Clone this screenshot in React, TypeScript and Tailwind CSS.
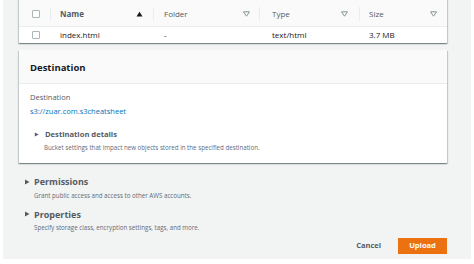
import React from 'react'

const font = { fontFamily: '"Open Sans", "Noto Sans", sans-serif' }

function Box() {
  return <span className="inline-block w-[8px] h-[8px] border border-[#aab7b8] rounded-[1px] bg-white" />
}

function Filter() {
  return (
    <svg width="7" height="6" viewBox="0 0 7 6" className="shrink-0">
      <path d="M0.5 0.8 H6.5 L3.5 5.2 Z" fill="none" stroke="#879596" strokeWidth="1" />
    </svg>
  )
}

function Caret({ size = 6 }: { size?: number }) {
  return (
    <svg width={size} height={size} viewBox="0 0 6 6" className="shrink-0">
      <path d="M1 0.5 L5.5 3 L1 5.5 Z" fill="#545b64" />
    </svg>
  )
}

function Section({ title, desc }: { title: string; desc: string }) {
  return (
    <div className="flex flex-col">
      <div className="flex items-center gap-[4px] h-[12px]">
        <Caret />
        <span className="text-[9px] font-bold text-[#545b64] leading-none">{title}</span>
      </div>
      <div className="pl-[10px] text-[6.2px] text-[#5f6b7a] leading-none mt-[5px]">{desc}</div>
    </div>
  )
}

export default function App() {
  return (
    <div className="w-[474px] h-[264px] bg-white overflow-hidden" style={font}>
      <div className="ml-[3px] w-[468px] h-[259px] bg-[#f2f3f3] flex flex-col pl-[16px] pr-[24px]">
        {/* objects table */}
        <div className="mt-[-6px] bg-white shadow-[0_1px_1px_rgba(0,28,36,0.3),1px_1px_1px_rgba(0,28,36,0.15),-1px_1px_1px_rgba(0,28,36,0.15)]">
          <div className="flex items-center h-[33px] pt-[8px] bg-[#fafafa] border-b border-[#eaeded] text-[8px] font-bold text-[#545b64]">
            <div className="w-[31px] flex justify-center pl-[2px]"><Box /></div>
            <div className="w-[103px] h-[14px] border-l border-[#eaeded] flex items-center justify-between pl-[9px] pr-[10px]">
              <span>Name</span>
              <svg width="7" height="6" viewBox="0 0 7 6"><path d="M0.5 5.5 L3.5 0.8 L6.5 5.5 Z" fill="#16191f" /></svg>
            </div>
            <div className="w-[106px] h-[14px] border-l border-[#eaeded] flex items-center justify-between pl-[10px] pr-[9px] font-normal">
              <span>Folder</span><Filter />
            </div>
            <div className="w-[100px] h-[14px] border-l border-[#eaeded] flex items-center justify-between pl-[12px] pr-[11px] font-normal">
              <span>Type</span><Filter />
            </div>
            <div className="flex-1 h-[14px] border-l border-[#eaeded] flex items-center justify-between pl-[9px] pr-[10px] font-normal">
              <span>Size</span><Filter />
            </div>
          </div>
          <div className="flex items-center h-[16px] text-[8px] text-[#16191f]">
            <div className="w-[31px] flex justify-center pl-[2px]"><Box /></div>
            <div className="w-[103px] pl-[10px]">index.html</div>
            <div className="w-[106px] pl-[11px]">-</div>
            <div className="w-[100px] pl-[13px]">text/html</div>
            <div className="flex-1 pl-[10px]">3.7 MB</div>
          </div>
        </div>

        {/* destination card */}
        <div className="mt-[7px] bg-white shadow-[0_1px_1px_rgba(0,28,36,0.3),1px_1px_1px_rgba(0,28,36,0.15),-1px_1px_1px_rgba(0,28,36,0.15)] flex flex-col">
          <div className="h-[34px] pt-[3px] bg-[#fafafa] border-b border-[#eaeded] flex items-center px-[11px]">
            <span className="text-[9.5px] font-bold text-[#16191f]">Destination</span>
          </div>
          <div className="flex flex-col px-[11px] pt-[8px] pb-[12px]">
            <span className="text-[7.5px] text-[#545b64] leading-[10px]">Destination</span>
            <span className="text-[7.5px] text-[#0073bb] leading-[10px] mt-[4px]">s3://zuar.com.s3cheatsheet</span>
            <div className="flex items-center gap-[6px] mt-[15px] pl-[4px]">
              <Caret size={5} />
              <span className="text-[7.6px] font-bold text-[#545b64] leading-none">Destination details</span>
            </div>
            <span className="pl-[14px] mt-[6px] text-[6.2px] text-[#5f6b7a] leading-none">
              Bucket settings that impact new objects stored in the specified destination.
            </span>
          </div>
        </div>

        {/* collapsed sections */}
        <div className="flex flex-col gap-[9px] mt-[13px] pl-[5px]">
          <Section title="Permissions" desc="Grant public access and access to other AWS accounts." />
          <Section title="Properties" desc="Specify storage class, encryption settings, tags, and more." />
        </div>

        <div className="flex-1" />
        <div className="flex items-center justify-end gap-[6px] mb-[5px]">
          <button className="h-[16px] px-[11px] text-[7.5px] font-bold text-[#545b64]">Cancel</button>
          <button className="h-[16px] w-[49px] bg-[#ec7211] border border-[#ec7211] text-[7.5px] font-bold text-white">Upload</button>
        </div>
      </div>
    </div>
  )
}
